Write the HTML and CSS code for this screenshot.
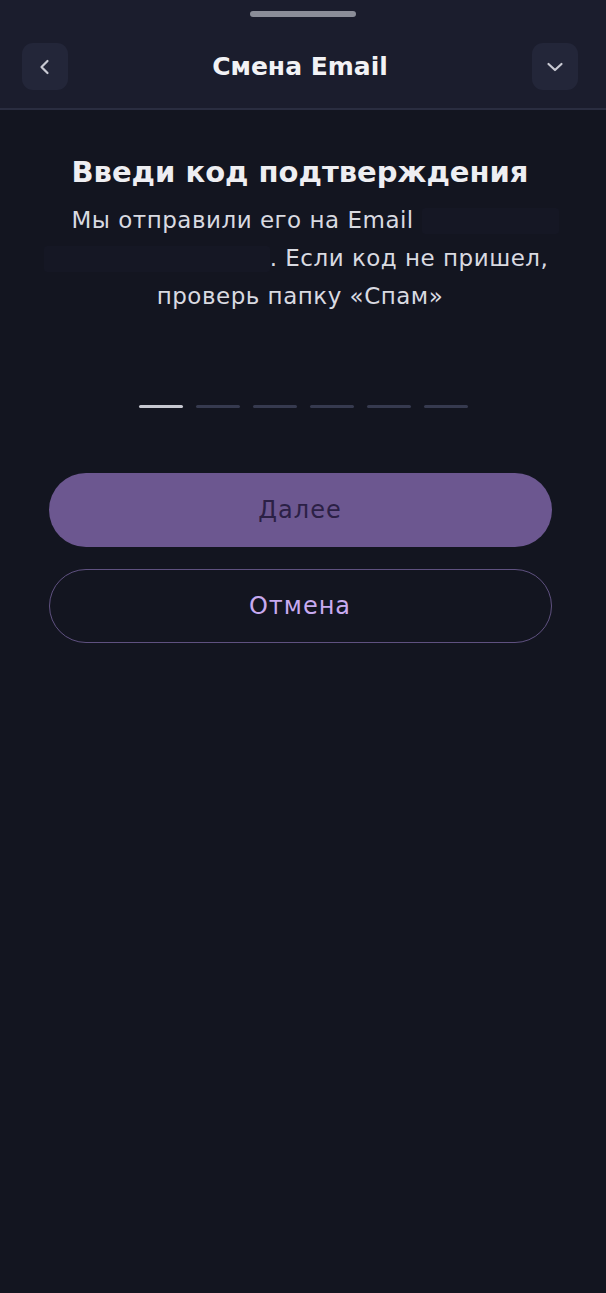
FILE: index.html
```html
<!DOCTYPE html>
<html lang="ru">
<head>
    <meta charset="UTF-8">
    <meta name="viewport" content="width=device-width, initial-scale=1.0">
    <title>Смена Email</title>
    <link rel="stylesheet" href="styles.css">
</head>
<body>
    <div class="sheet">
        <div class="header">
            <div class="handle"></div>
            <div class="bar">
                <button class="icon-btn" aria-label="Назад">
                    <svg width="20" height="20" viewBox="0 0 20 20"><path d="M12.5 4 L6.5 10 L12.5 16" fill="none" stroke="#c9cad3" stroke-width="2.2" stroke-linecap="round" stroke-linejoin="round"/></svg>
                </button>
                <div class="title">Смена Email</div>
                <button class="icon-btn" aria-label="Свернуть">
                    <svg width="22" height="22" viewBox="0 0 22 22"><path d="M4.5 8 L11 14 L17.5 8" fill="none" stroke="#c9cad3" stroke-width="2.2" stroke-linecap="round" stroke-linejoin="round"/></svg>
                </button>
            </div>
        </div>

        <div class="content">
            <h1>Введи код подтверждения</h1>
            <p class="hint">
                Мы отправили его на Email <span class="mail mail-a"></span><br>
                <span class="mail mail-b"></span>. Если код не пришел,<br>
                проверь папку «Спам»
            </p>

            <div class="code">
                <span class="dash active"></span>
                <span class="dash"></span>
                <span class="dash"></span>
                <span class="dash"></span>
                <span class="dash"></span>
                <span class="dash"></span>
            </div>

            <div class="actions">
                <button class="btn primary">Далее</button>
                <button class="btn outline">Отмена</button>
            </div>
        </div>
    </div>
</body>
</html>
```

FILE: styles.css
```css
body {
    margin: 0;
    background: #131520;
    font-family: "DejaVu Sans", "Noto Sans", sans-serif;
    color: #e4e5ea;
}

.sheet {
    min-height: 1293px;
    display: flex;
    flex-direction: column;
}

.header {
    background: #1b1d2d;
    border-bottom: 2px solid #2a2d40;
    padding-top: 11px;
}

.handle {
    width: 106px;
    height: 6px;
    border-radius: 3px;
    background: #8b8d98;
    margin: 0 auto;
}

.bar {
    display: flex;
    align-items: center;
    justify-content: space-between;
    padding: 26px 28px 18px 22px;
}

.icon-btn {
    width: 46px;
    height: 47px;
    border: none;
    border-radius: 11px;
    background: #232639;
    display: flex;
    align-items: center;
    justify-content: center;
    padding: 0;
}

.title {
    font-size: 25px;
    font-weight: 600;
    color: #f2f2f5;
}

.content {
    display: flex;
    flex-direction: column;
    align-items: center;
    padding: 0 6px 0 0;
}

h1 {
    margin: 45px 0 0;
    font-size: 29px;
    font-weight: 700;
    color: #eeeef2;
    text-align: center;
}

.hint {
    margin: 12px 0 0;
    font-size: 23px;
    letter-spacing: 0.5px;
    line-height: 38px;
    text-align: center;
    color: #d9dae1;
    width: 580px;
}

.mail {
    display: inline-block;
    height: 26px;
    vertical-align: -6px;
    background: #151724;
    border-radius: 3px;
}

.mail-a {
    width: 137px;
    margin-right: -30px;
}

.mail-b {
    width: 226px;
    margin-left: -8px;
}

.code {
    display: flex;
    gap: 13px;
    margin-top: 90px;
    margin-left: 6px;
}

.dash {
    width: 44px;
    height: 3px;
    border-radius: 2px;
    background: #363a4f;
}

.dash.active {
    background: #c6c7d0;
}

.actions {
    display: flex;
    flex-direction: column;
    gap: 22px;
    width: 503px;
    margin-top: 65px;
}

.btn {
    height: 74px;
    border-radius: 37px;
    font-family: inherit;
    font-size: 24px;
    letter-spacing: 1px;
    font-weight: 500;
}

.btn.primary {
    background: #6c5790;
    border: none;
    color: #2b2045;
}

.btn.outline {
    background: transparent;
    border: 1.5px solid #5f5180;
    color: #c8aaf0;
}
```
